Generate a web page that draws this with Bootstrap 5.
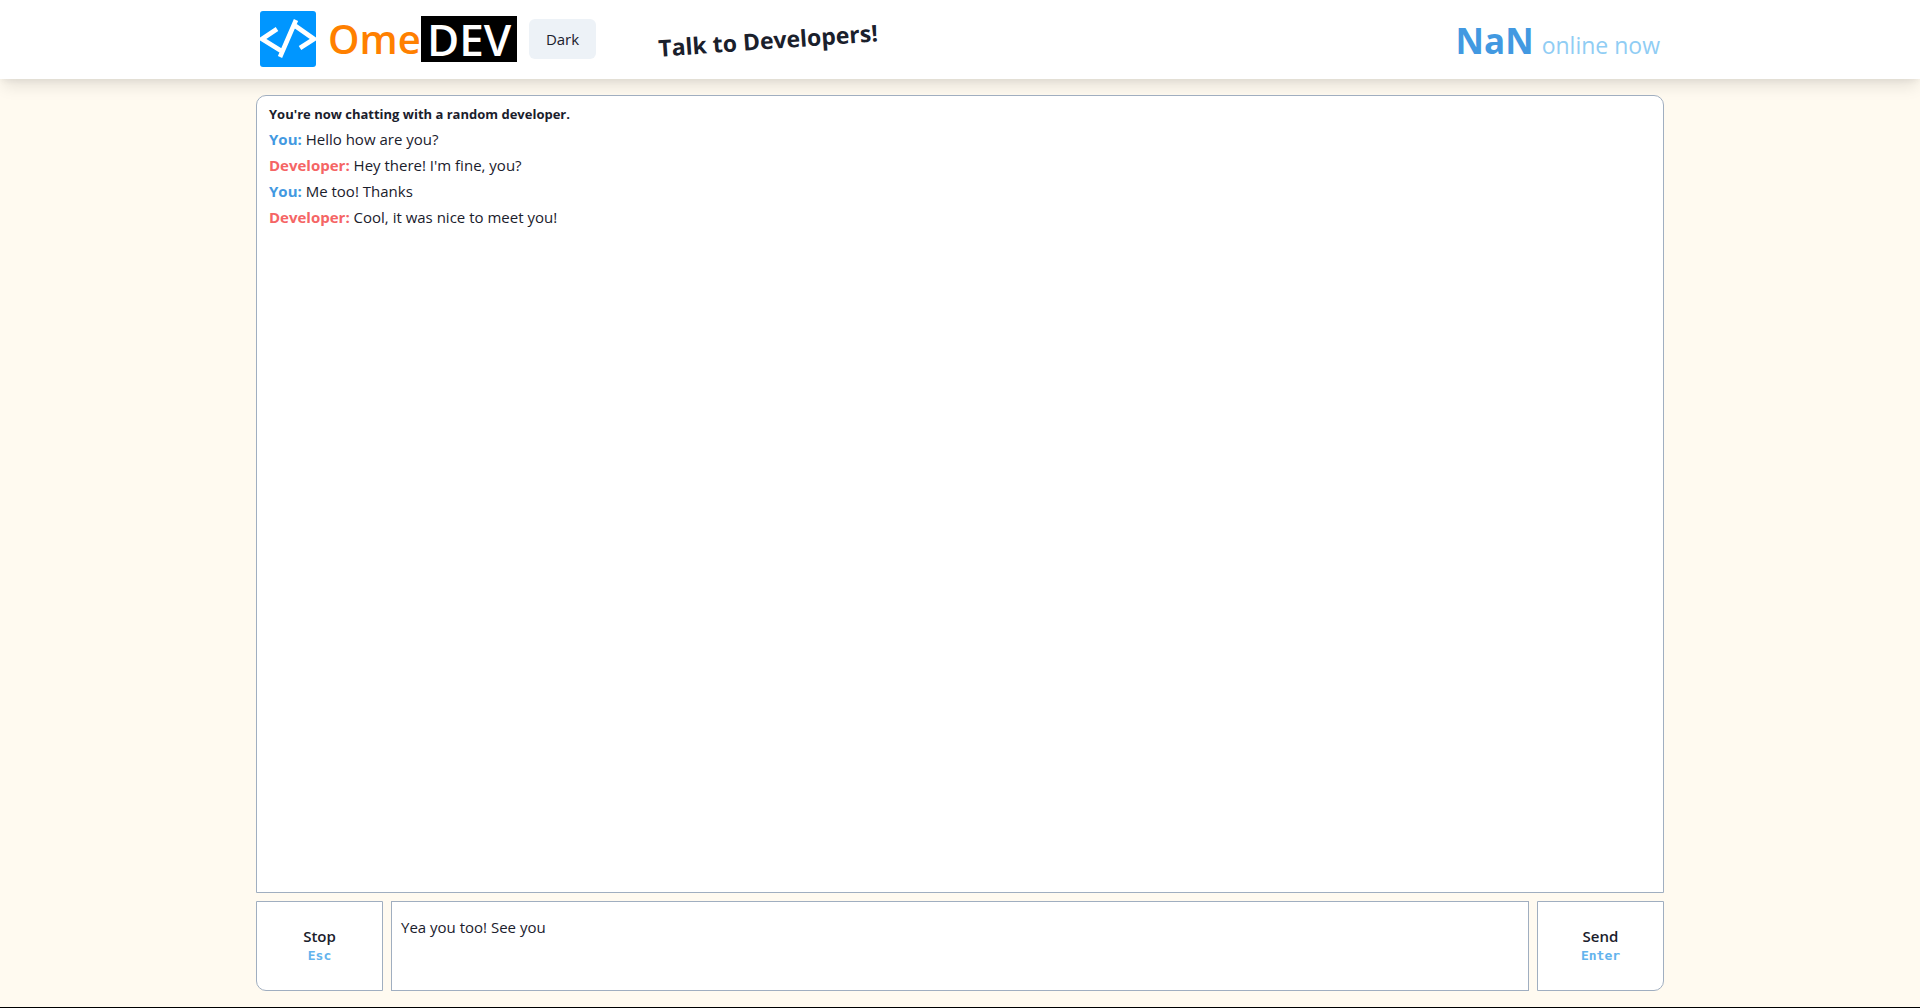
<!DOCTYPE html>
<html lang="en">
<head>
<meta charset="utf-8">
<meta name="viewport" content="width=device-width, initial-scale=1">
<title>OmeDEV</title>
<link href="https://cdn.jsdelivr.net/npm/bootstrap@5.3.0/dist/css/bootstrap.min.css" rel="stylesheet">
<style>
  body { background: #fffaf0; color: #1a202c; font-family: "Open Sans", "Noto Sans", sans-serif; font-size: 15px; border-bottom: 1px solid #000; }
  .wrap { max-width: 1408px; }
  .topbar { height: 79px; padding-bottom: 1px; box-shadow: 0 10px 15px -3px rgba(0,0,0,.1), 0 4px 6px -2px rgba(0,0,0,.05); }
  .logo-icon { width: 56px; height: 56px; }
  .logo-text { font-size: 40px; line-height: 46px; font-weight: 600; color: #ff8000; }
  .logo-text b { background: #000; color: #fff; font-size: 44px; font-weight: 600; width: 96px; text-align: center; }
  .logo-text i { width: 93px; font-style: normal; }
  .btn-theme { --bs-btn-bg: #edf2f7; --bs-btn-color: #1a202c; --bs-btn-hover-bg: #e2e8f0; --bs-btn-border-radius: 6px; font-size: 15px; font-weight: 500; width: 67px; height: 40px; margin-left: 12px; }
  .tagline { font-size: 23px; line-height: 36px; padding-top: 2px; font-weight: 700; margin-left: 62px; transform: rotate(-4deg); }
  .count { font-size: 35px; line-height: 48px; font-weight: 700; color: #4299e1; }
  .online { font-size: 23px; color: #90cdf4; }
  .line { border: 1px solid #a0aec0; background: #fff; }
  .chat { border-radius: 10px 10px 0 0; padding: 7px 12px; line-height: 26px; }
  .notice { font-size: 13px; line-height: 23px; font-weight: 700; }
  .you { color: #4299e1; }
  .dev { color: #f56565; }
  .composer { height: 90px; }
  .action { width: 127px; color: #1a202c; font-weight: 600; line-height: 20px; }
  .action kbd { font-family: "DejaVu Sans Mono", monospace; font-size: 13px; line-height: 20px; font-weight: 700; background: none; color: #63b3ed; }
  .action-stop { border-radius: 0 0 0 10px; }
  .action-send { border-radius: 0 0 10px 0; }
  .message { resize: none; padding: 14px 9px; line-height: 22px; color: #1a202c; border-radius: 0; }
</style>
</head>
<body class="d-flex flex-column min-vh-100">
<header class="topbar bg-white flex-shrink-0 d-flex">
  <div class="wrap container-fluid px-1 d-flex align-items-center">
    <a href="#" class="d-flex align-items-center text-decoration-none" aria-label="OmeDEV home">
      <svg class="logo-icon" viewBox="0 0 56 56" aria-hidden="true">
        <rect width="56" height="56" rx="3" fill="#0096ff"/>
        <path d="M17 18 2 28l21 13M20 46 36 9M34 14l20 14-14 9" fill="none" stroke="#fff" stroke-width="4.6"/>
      </svg>
      <span class="logo-text d-flex ms-2 ps-1"><i>Ome</i><b>DEV</b></span>
    </a>
    <button type="button" class="btn btn-theme p-0">Dark</button>
    <div class="tagline">Talk to Developers!</div>
    <div class="ms-auto pt-1 d-flex align-items-baseline gap-2">
      <span class="count">NaN</span><span class="online">online now</span>
    </div>
  </div>
</header>
<main class="wrap container-fluid px-0 py-3 flex-grow-1 d-flex flex-column gap-2">
  <section class="chat line flex-grow-1" aria-label="Conversation">
    <div class="notice">You're now chatting with a random developer.</div>
    <div><b class="you">You:</b> Hello how are you?</div>
    <div><b class="dev">Developer:</b> Hey there! I'm fine, you?</div>
    <div><b class="you">You:</b> Me too! Thanks</div>
    <div><b class="dev">Developer:</b> Cool, it was nice to meet you!</div>
  </section>
  <form class="composer d-flex gap-2">
    <button type="button" class="action action-stop line d-flex flex-column align-items-center justify-content-center flex-shrink-0">Stop<kbd class="p-0">Esc</kbd></button>
    <textarea class="message line flex-grow-1" aria-label="Message">Yea you too! See you</textarea>
    <button type="button" class="action action-send line d-flex flex-column align-items-center justify-content-center flex-shrink-0">Send<kbd class="p-0">Enter</kbd></button>
  </form>
</main>
<script src="https://cdn.jsdelivr.net/npm/bootstrap@5.3.0/dist/js/bootstrap.bundle.min.js"></script>
</body>
</html>
